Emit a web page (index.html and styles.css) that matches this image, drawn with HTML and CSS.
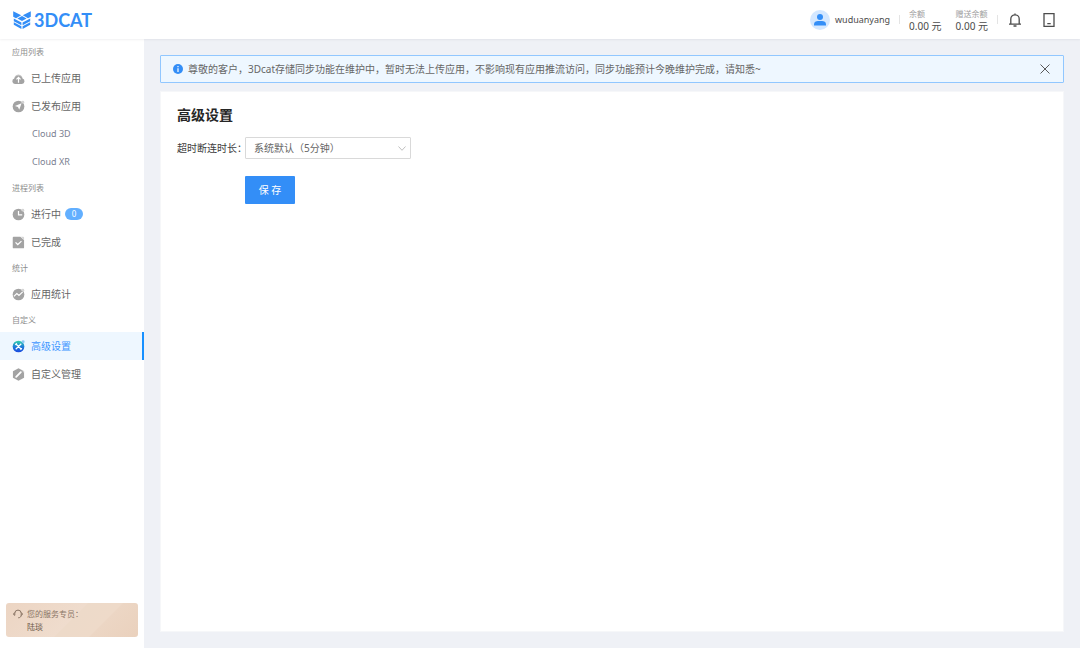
FILE: index.html
```html
<!DOCTYPE html>
<html lang="zh-CN">
<head>
<meta charset="utf-8">
<meta name="viewport" content="width=device-width, initial-scale=1">
<title>3DCAT - 高级设置</title>
<link rel="stylesheet" href="styles.css">
</head>
<body>
<header class="topbar">
  <a class="brand" href="#">
    <svg class="brand-mark" viewBox="0 0 18 18" aria-hidden="true">
      <path d="M.2.2 8.200 4.300 3 7.200.2 5.800zM17.800.2 9.800 4.300 15 7.200l2.800-1.400zM9 4.900l4.600 2.600L9 10 4.400 7.500zM.8 7.400l7.600 4v2.900l-7.600-4zM17.200 7.400l-7.600 4v2.900l7.600-4zM.8 11.200l7.600 4V18L.8 13.800zM17.200 11.200l-7.600 4V18l7.600-4.200z"/>
    </svg>
    <span>3DCAT</span>
  </a>
  <div class="account">
    <a class="user" href="#">
      <svg class="avatar" viewBox="0 0 20 20" aria-hidden="true">
        <circle class="avatar-bg" cx="10" cy="10" r="10"/>
        <circle cx="10" cy="7" r="3"/>
        <path d="M4 15.500v-1.200C4 12 6 11 8 11h4c2 0 4 1 4 3.300v1.200z"/>
      </svg>
      <span>wuduanyang</span>
    </a>
    <span class="divider"></span>
    <dl class="balance"><dt>余额</dt><dd>0.00 元</dd></dl>
    <dl class="balance gift"><dt>赠送余额</dt><dd>0.00 元</dd></dl>
    <span class="divider"></span>
    <button class="icon-button bell" type="button" aria-label="通知">
      <svg viewBox="0 0 14 14" aria-hidden="true"><path d="M7 .5v1.200M1 11.200h12M2.800 11V6a4.200 4.200 0 0 1 8.400 0v5M5.500 13h3"/></svg>
    </button>
    <button class="icon-button" type="button" aria-label="移动端">
      <svg viewBox="0 0 14 14" aria-hidden="true"><path d="M2 .7h10v12.600H2zM5.300 10.700h3.400"/></svg>
    </button>
  </div>
</header>
<div class="shell">
  <aside class="sidebar">
    <nav>
      <h2 class="group">应用列表</h2>
      <a class="item" href="#">
        <svg class="icon" viewBox="0 0 14 14" aria-hidden="true"><path class="pale" d="M2.600 8a4.400 4.400 0 1 1 8.600 0z"/><path d="M3.200 13a3 3 0 0 1-.6-5.900 4.500 4.500 0 0 1 8.600 0 3 3 0 0 1-.5 5.900z"/><path class="cut" d="M7 11.500V6M4.800 8 7 5.800 9.200 8"/></svg>
        <span>已上传应用</span>
      </a>
      <a class="item" href="#">
        <svg class="icon" viewBox="0 0 14 14" aria-hidden="true"><circle cx="7" cy="7" r="6.300"/><path class="white" d="M10.300 3.500 7.800 10.500 6.400 7.500 3.200 6.500z"/><circle class="light" cx="11.700" cy="2.300" r="1.500"/></svg>
        <span>已发布应用</span>
      </a>
      <a class="item sub" href="#">Cloud 3D</a>
      <a class="item sub" href="#">Cloud XR</a>
      <h2 class="group">进程列表</h2>
      <a class="item" href="#">
        <svg class="icon" viewBox="0 0 14 14" aria-hidden="true"><circle cx="7" cy="7" r="6.300"/><path class="cut" d="M7 3.200v4.300h4"/><circle class="light" cx="11.700" cy="2.300" r="1.500"/></svg>
        <span>进行中</span><span class="count">0</span>
      </a>
      <a class="item" href="#">
        <svg class="icon" viewBox="0 0 14 14" aria-hidden="true"><path d="M1.800.8H9l4 3.500v8q0 1-1 1H1.800q-1 0-1-1V1.800q0-1 1-1z"/><path class="light" d="M9.500.8H12q1 0 1 1V4z"/><path class="cut" d="m3.800 6.800 2.400 2.400 4-3.700"/></svg>
        <span>已完成</span>
      </a>
      <h2 class="group">统计</h2>
      <a class="item" href="#">
        <svg class="icon" viewBox="0 0 14 14" aria-hidden="true"><circle cx="7" cy="7" r="6.300"/><path class="cut" d="m2 9 3.200-3 2.300 2 4-3.800"/><circle class="light" cx="11.700" cy="2.300" r="1.500"/></svg>
        <span>应用统计</span>
      </a>
      <h2 class="group">自定义</h2>
      <a class="item active" href="#" aria-current="page">
        <svg class="icon" viewBox="0 0 14 14" aria-hidden="true">
          <defs><linearGradient id="tools" x1="0" y1="0" x2="0" y2="1"><stop offset="0" stop-color="#35d6a8"/><stop offset=".5" stop-color="#1f7fd8"/><stop offset="1" stop-color="#1a48e0"/></linearGradient></defs>
          <circle cx="7" cy="7" r="6.300" fill="url(#tools)"/><path class="cut" d="m4 4 6 6M10 4l-6 6M3.500 5.200 5.200 3.500M9 10.700l1.700-1.700"/><circle class="spark" cx="12" cy="2" r="1.600"/>
        </svg>
        <span>高级设置</span>
      </a>
      <a class="item" href="#">
        <svg class="icon" viewBox="0 0 14 14" aria-hidden="true"><path d="m7 .2 6 3.400v6.800l-6 3.400-6-3.400V3.600z"/><path class="light" d="m10 1.900 3 1.700v1.900z"/><path class="pen" d="m4.500 9.500 5-5"/></svg>
        <span>自定义管理</span>
      </a>
    </nav>
    <section class="agent">
      <svg class="headset" viewBox="0 0 10 10" aria-hidden="true"><path d="M1.800 6.300V4.300a3.200 3.200 0 0 1 6.400 0V6c0 1.800-1.200 2.800-3 2.800M1.800 3.800C.2 3.800.2 6.300 1.800 6.300M8.200 3.800c1.600 0 1.600 2.500 0 2.500"/></svg>
      <div><p>您的服务专员：</p><p class="agent-name">陆琰</p></div>
    </section>
  </aside>
  <main class="content">
    <div class="notice" role="status">
      <svg class="info" viewBox="0 0 10 10" aria-hidden="true"><circle cx="5" cy="5" r="5"/><path d="M5 2v1.200M5 4.300V8"/></svg>
      <p>尊敬的客户，3Dcat存储同步功能在维护中，暂时无法上传应用，不影响现有应用推流访问，同步功能预计今晚维护完成，请知悉~</p>
      <button class="close" type="button" aria-label="关闭"><svg viewBox="0 0 10 10" aria-hidden="true"><path d="m.5.500 9 9M9.500.500l-9 9"/></svg></button>
    </div>
    <section class="card">
      <h1>高级设置</h1>
      <form class="settings">
        <label for="timeout">超时断连时长：</label>
        <div class="select-box">
          <select id="timeout"><option>系统默认（5分钟）</option></select>
          <svg class="chevron" viewBox="0 0 8 5" aria-hidden="true"><path d="m.5.500 3.500 3.800L7.500.500"/></svg>
        </div>
        <button class="save" type="button">保 存</button>
      </form>
    </section>
  </main>
</div>
</body>
</html>
```
FILE: styles.css
```css
* { box-sizing: border-box; }
body {
  margin: 0;
  min-height: 100vh;
  display: flex;
  flex-direction: column;
  background: #eff1f6;
  color: #666;
  font: 10px/14px "Noto Sans", "Noto Sans CJK SC", sans-serif;
}
h1, h2, p, dl, dd { margin: 0; }
a { color: inherit; text-decoration: none; }
button { border: 0; padding: 0; background: none; font: inherit; cursor: pointer; }
svg { display: block; flex: none; }

.topbar {
  position: relative;
  display: flex;
  justify-content: space-between;
  align-items: center;
  height: 39px;
  padding: 0 24px 0 13px;
  background: #fff;
  box-shadow: 0 1px 2px rgba(0, 21, 41, .06);
}
.brand {
  display: flex;
  align-items: center;
  gap: 3px;
  color: #338ef7;
  font: bold 18px/18px Lato, sans-serif;
}
.brand-mark { width: 18px; height: 18px; fill: #338ef7; }
.account { display: flex; align-items: center; }
.user { display: flex; align-items: center; gap: 5px; color: #4c4c4c; font-size: 9px; }
.avatar { width: 20px; height: 20px; fill: #338ef7; }
.avatar-bg { fill: #d3e7ff; }
.divider { width: 1px; height: 9px; margin: 0 9px; background: #e4e4e4; }
.balance { line-height: 13px; color: #4c4c4c; }
.balance dt { color: #a0a0a0; font-size: 8px; }
.gift { margin-left: 14px; }
.icon-button { width: 14px; height: 14px; margin-left: 20px; }
.icon-button.bell { margin-left: 1px; }
.icon-button svg { width: 14px; height: 14px; fill: none; stroke: #4c4c4c; stroke-width: 1.3; }

.shell { display: flex; flex: 1; }
.sidebar {
  display: flex;
  flex: none;
  flex-direction: column;
  justify-content: space-between;
  width: 144px;
  padding: 1px 0 11px;
  background: #fff;
}
.group { padding-left: 12px; color: #8c8c8c; font-size: 8px; font-weight: normal; line-height: 24px; }
.item { display: flex; align-items: center; gap: 6px; height: 28px; padding-left: 12px; }
.sub { padding-left: 32px; color: #7a8090; font-size: 9px; }
.active { border-right: 2px solid #1890ff; background: #eef7ff; color: #4096ff; }
.icon { width: 13px; height: 13px; fill: #a3a3a3; }
.cut { fill: none; stroke: #fff; stroke-width: 1.3; }
.pen { fill: none; stroke: #fff; stroke-width: 2; stroke-linecap: round; }
.white { fill: #fff; }
.light { fill: #d5d5d5; }
.pale { fill: #c4c4c4; }
.spark { fill: #8cc8f5; }
.count {
  width: 18px;
  margin-left: -2px;
  border-radius: 6px;
  background: #62afff;
  color: #fff;
  font-size: 8px;
  line-height: 12px;
  text-align: center;
}
.agent {
  display: flex;
  gap: 4px;
  margin: 0 6px;
  padding: 4px 7px;
  border-radius: 3px;
  background: linear-gradient(135deg, #ecd5c3 0%, #efdccd 49%, #eddac9 50%, #eedac9 70%, #ecd6c4 71%, #ead1bd 100%);
  color: #8a7565;
  font-size: 8px;
  line-height: 13px;
}
.agent-name { color: #6f5a4b; }
.headset { width: 10px; height: 10px; margin-top: 2px; fill: none; stroke: #8a7565; stroke-width: 1; }

.content { display: flex; flex: 1; flex-direction: column; gap: 8px; min-width: 0; padding: 16px 16px 16px; }
.notice {
  display: flex;
  align-items: center;
  gap: 5px;
  min-height: 28px;
  padding: 0 13px 0 12px;
  border: 1px solid #91c7ff;
  border-radius: 1px;
  background: #eef7ff;
}
.notice p { flex: 1; }
.info { width: 10px; height: 10px; fill: #338ef7; }
.info path { stroke: #fff; stroke-width: 1.2; }
.close svg { width: 10px; height: 10px; stroke: #595959; }
.card { flex: 1; padding: 14px 16px; border: 1px solid #f6f7f9; background: #fff; }
.card h1 { color: #262626; font-size: 14px; line-height: 18px; }
.settings { display: grid; grid-template-columns: 68px 166px; row-gap: 17px; align-items: center; margin-top: 13px; }
.settings label { color: #404040; white-space: nowrap; }
.select-box { display: grid; align-items: center; }
.select-box select, .chevron { grid-area: 1 / 1; }
.select-box select {
  appearance: none;
  width: 100%;
  height: 22px;
  padding: 0 8px;
  border: 1px solid #d9d9d9;
  border-radius: 1px;
  background: #fff;
  color: #666;
  font: inherit;
}
.chevron { justify-self: end; width: 8px; height: 5px; margin-right: 5px; fill: none; stroke: #bfbfbf; pointer-events: none; }
.save { grid-column: 2; width: 50px; height: 28px; border-radius: 1px; background: #338ef7; color: #fff; }
```
